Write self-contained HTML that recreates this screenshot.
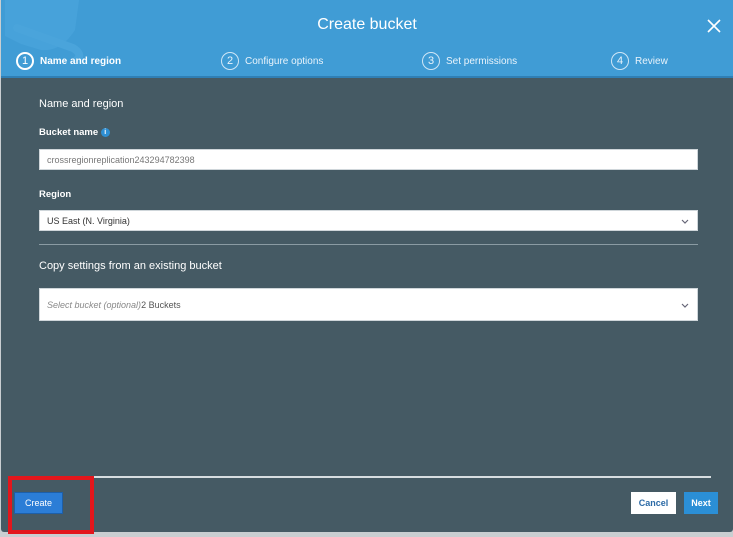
<!DOCTYPE html>
<html><head><meta charset="utf-8"><style>
*{margin:0;padding:0;box-sizing:border-box}
body{width:733px;height:537px;background:#c9ced1;font-family:"Liberation Sans",sans-serif;position:relative;overflow:hidden}
.modal{position:absolute;left:1px;top:0;width:732px;height:532px;background:#455a64;border-radius:0 0 3px 3px}
.hdr{position:absolute;left:0;top:0;width:732px;height:78px;background:#409cd5;border-bottom:2px solid #2f7fb5}
.title{position:absolute;left:0;width:732px;top:16px;text-align:center;color:#fff;font-size:16px}
.step{position:absolute;top:52px;color:#e8f3fb;font-size:10px;display:flex;align-items:center}
.step .c{width:18px;height:18px;border:1px solid #cfe6f6;border-radius:50%;display:inline-flex;align-items:center;justify-content:center;margin-right:6px;font-size:11px}
.step.a{color:#fff;font-weight:bold}
.step.a .c{border:2px solid #fff;font-weight:normal}
.lbl{position:absolute;left:38px;color:#fff}
.inp{position:absolute;left:38px;width:659px;background:#fff;border:1px solid #cfd6da;font-size:9px;color:#555;padding-left:7px;display:flex;align-items:center}
.chev{position:absolute;right:8px;top:50%;margin-top:-4px}
.hr{position:absolute;left:38px;width:659px;height:1px;background:#8a9ba3}
.btn{position:absolute;font-size:9px;font-weight:bold;display:flex;align-items:center;justify-content:center}
</style></head><body>
<div class="modal">
<div class="hdr">
<svg style="position:absolute;left:0;top:0" width="100" height="78"><path d="M4 0 L78 0 L74 30 Q60 52 40 50 L20 44 L4 36Z" fill="#47a2da"/><path d="M16 28 L72 48 Q82 54 76 60" stroke="#4aa4db" stroke-width="8" fill="none" stroke-linecap="round"/></svg>
<div class="title">Create bucket</div>
<svg style="position:absolute;right:12px;top:19px" width="14" height="14"><path d="M1 1L13 13M13 1L1 13" stroke="#fff" stroke-width="1.6"/></svg>
<div class="step a" style="left:15px"><span class="c">1</span>Name and region</div>
<div class="step" style="left:220px"><span class="c">2</span>Configure options</div>
<div class="step" style="left:421px"><span class="c">3</span>Set permissions</div>
<div class="step" style="left:610px"><span class="c">4</span>Review</div>
</div>
<div class="lbl" style="top:98px;font-size:11px">Name and region</div>
<div class="lbl" style="top:127px;font-size:9.5px;font-weight:bold">Bucket name <span style="display:inline-block;width:9px;height:9px;border-radius:50%;background:#2e8fd3;color:#fff;font-size:7px;text-align:center;line-height:9px;vertical-align:middle">i</span></div>
<div class="inp" style="top:149px;height:21px;color:#777">crossregionreplication243294782398</div>
<div class="lbl" style="top:189px;font-size:9.5px;font-weight:bold">Region</div>
<div class="inp" style="top:210px;height:21px;color:#333">US East (N. Virginia)<svg class="chev" width="8" height="8"><path d="M1 3L4 6L7 3" stroke="#667" fill="none" stroke-width="1.2"/></svg></div>
<div class="hr" style="top:244px"></div>
<div class="lbl" style="top:260px;font-size:11px">Copy settings from an existing bucket</div>
<div class="inp" style="top:288px;height:33px;color:#888"><i>Select bucket (optional)</i><span style="color:#555">2 Buckets</span><svg class="chev" width="8" height="8"><path d="M1 3L4 6L7 3" stroke="#667" fill="none" stroke-width="1.2"/></svg></div>
<div style="position:absolute;left:58px;top:476px;width:652px;height:2px;background:#d7dde0"></div>
<div class="btn" style="left:13px;top:492px;width:49px;height:22px;background:#2b7dd6;color:#fff;border:1px solid #1d5fa8;font-weight:normal">Create</div>
<div class="btn" style="left:630px;top:492px;width:45px;height:22px;background:#fff;color:#2b6aa6">Cancel</div>
<div class="btn" style="left:683px;top:492px;width:34px;height:22px;background:#2b8fd6;color:#fff">Next</div>
</div>
<div style="position:absolute;left:8px;top:476px;width:86px;height:58px;border:4px solid #e3161c"></div>
</body></html>
